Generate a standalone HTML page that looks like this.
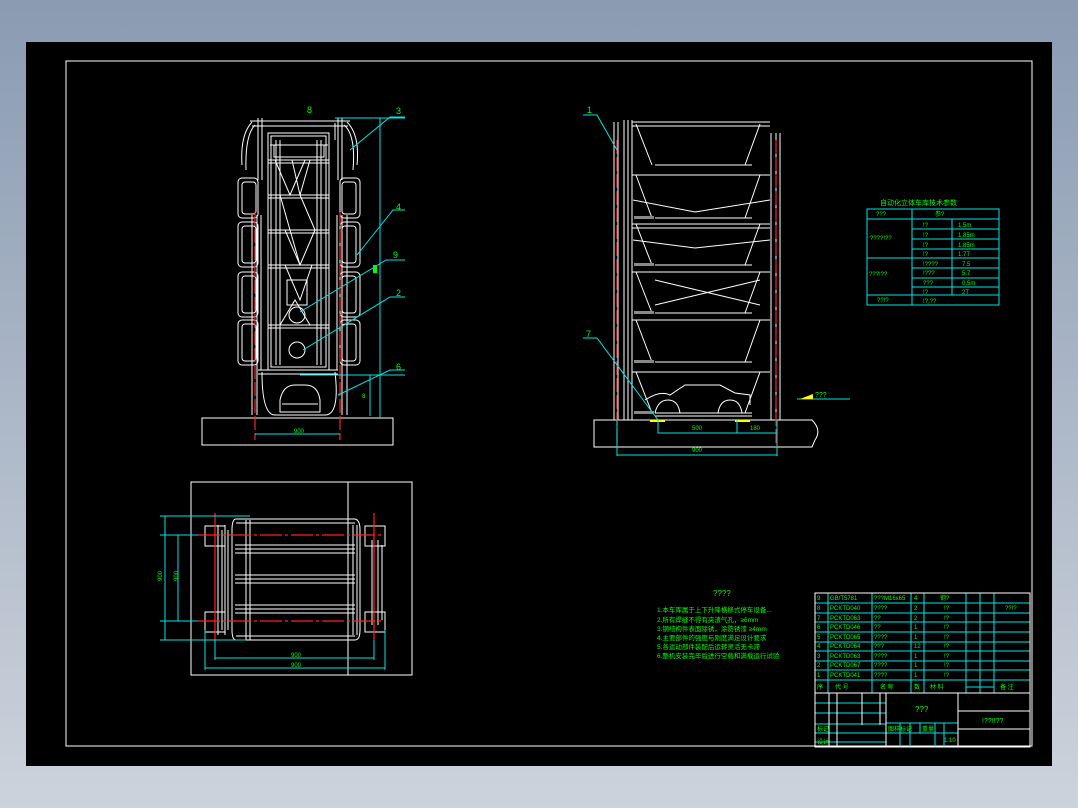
<!DOCTYPE html>
<html><head><meta charset="utf-8"><style>
html,body{margin:0;padding:0;width:1078px;height:808px;overflow:hidden;background:linear-gradient(#8a9bb2,#cdd3dc);}
svg{position:absolute;left:0;top:0}
text{font-family:"Liberation Sans","Noto Sans CJK SC",sans-serif;fill:#00ff00}
</style></head><body>
<svg width="1078" height="808" viewBox="0 0 1078 808">
<rect x="26" y="42" width="1026" height="724" fill="#000"/>
<rect x="66" y="61" width="966" height="685" fill="none" stroke="#fff" stroke-width="1"/>

<!-- LEFT ELEVATION -->
<g stroke="#fff" fill="none" stroke-width="1">
<rect x="202" y="418" width="191" height="27"/>
<path d="M252 122 Q240 135 242 165 M347 122 Q360 135 357 165 M255 125 Q245 135 246 170 M344 125 Q356 135 353 170"/>
<path d="M250 121 H350 M252 126 H348 M258 118 V180 M262 118 V180 M338 118 V180 M342 118 V180"/>
<rect x="268" y="133" width="61" height="237"/>
<rect x="271" y="136" width="55" height="231"/>
<rect x="274" y="145" width="50" height="12"/>
<path d="M268 160 H329 M268 163 H329 M268 195 H329 M268 198 H329 M268 230 H329 M268 233 H329 M268 265 H329 M268 268 H329 M268 325 H329 M268 328 H329"/>
<path d="M276 140 V365 M280 140 V365 M317 140 V365 M321 140 V365"/>
<path d="M275 160 L290 195 L305 160 M300 195 L315 230 M280 195 L290 230 L300 265 M285 230 L300 265 L315 230 M292 160 L300 195 M310 160 L300 195"/>
<path d="M285 265 L300 300 L312 265 M280 325 L295 300 L310 325"/>
<rect x="238" y="178" width="20" height="40" rx="4"/><rect x="238" y="222" width="20" height="45" rx="4"/>
<rect x="238" y="272" width="20" height="45" rx="4"/><rect x="238" y="320" width="20" height="45" rx="4"/>
<rect x="340" y="178" width="20" height="40" rx="4"/><rect x="340" y="222" width="20" height="45" rx="4"/>
<rect x="340" y="272" width="20" height="45" rx="4"/><rect x="340" y="320" width="20" height="45" rx="4"/>
<rect x="242" y="182" width="14" height="32" rx="3"/><rect x="242" y="226" width="14" height="37" rx="3"/>
<rect x="242" y="276" width="14" height="37" rx="3"/><rect x="242" y="324" width="14" height="37" rx="3"/>
<rect x="342" y="182" width="14" height="32" rx="3"/><rect x="342" y="226" width="14" height="37" rx="3"/>
<rect x="342" y="276" width="14" height="37" rx="3"/><rect x="342" y="324" width="14" height="37" rx="3"/>
<path d="M252 215 V415 M257 215 V415 M342 215 V415 M347 215 V415 M261 215 V370 M337 215 V370"/>
<path d="M258 370 H338 M258 374 H338 M262 372 Q262 415 275 415 H325 Q340 415 335 372"/>
<path d="M280 400 Q283 385 295 385 H305 Q318 385 320 400 V412 H280 Z M282 404 H318"/>
<rect x="287" y="280" width="20" height="25"/><circle cx="297" cy="315" r="8"/><circle cx="297" cy="350" r="8"/>
<path d="M262 123 V140 M335 123 V140 M270 145 H328"/>
</g>
<g stroke="#ff2020" stroke-width="1.2"><path d="M255 212 V440 M340 212 V440" stroke-dasharray="14 3"/></g>
<g stroke="#00e5e5" fill="none" stroke-width="1">
<path d="M335 118 H380 V418 M380 118 H405 M255 434 H340 M300 375 H370 V416 M370 375 H405"/>
<path d="M350 150 L390 117 H405 M357 255 L393 210 H405 M300 312 L386 260 H405 M303 350 L390 297 H405 M338 395 L390 370 H405"/>
</g>
<g font-size="9"><text x="307" y="113">8</text><text x="396" y="114">3</text><text x="396" y="210">4</text><text x="393" y="258">9</text><text x="396" y="296">2</text><text x="396" y="370">6</text>
<text x="294" y="433" font-size="6">900</text><text x="362" y="398" font-size="6">8</text></g>
<rect x="373" y="265" width="4" height="8" fill="#0f0"/>

<!-- RIGHT ELEVATION -->
<g stroke="#fff" fill="none" stroke-width="1">
<path d="M594 420 H812 Q822 430 815 440 L812 447 H594 Z"/>
<path d="M614 122 V420 M618 122 V420 M624 120 V420 M628 120 V420 M632 120 V420"/>
<path d="M771 133 V420 M776 133 V420 M780 133 V420"/>
<path d="M632 122 H770 M632 126 H770 M655 165 H752 M632 175 H770 M655 218 H752 M632 224 H770 M632 228 H770 M655 265 H752 M632 272 H770 M655 313 H752 M632 320 H770 M655 362 H752 M632 372 H770 M655 413 H752 M655 416 H752"/>
<path d="M636 124 L652 165 M760 124 L745 165 M636 175 L652 218 M760 175 L745 218 M636 224 L652 265 M760 224 L745 265 M636 272 L652 313 M760 272 L745 313 M636 320 L652 362 M760 320 L745 362 M636 372 L652 413 M760 372 L745 413"/>
<path d="M633 200 L695 212 L770 200 M633 240 L695 248 L770 240 M655 280 L760 305 M655 305 L760 280"/>
<path d="M645 400 Q660 390 670 395 L685 385 H720 L735 393 L750 395 V405 M655 413 Q658 400 668 400 Q678 400 680 413 M718 413 Q720 400 730 400 Q740 400 742 413"/>
</g>
<g fill="#888"><rect x="634" y="216" width="20" height="3"/><rect x="634" y="263" width="20" height="3"/><rect x="634" y="311" width="20" height="3"/><rect x="634" y="360" width="20" height="3"/><rect x="634" y="411" width="20" height="3"/></g>
<g stroke="#ff2020" stroke-width="1.2" stroke-dasharray="14 3"><path d="M617 140 V447 M776 140 V447"/></g>
<rect x="650" y="420" width="15" height="2" fill="#ff0"/><rect x="735" y="420" width="15" height="2" fill="#ff0"/>
<g stroke="#00e5e5" fill="none" stroke-width="1">
<path d="M583 115 H597 L617 150 M583 338 H597 L658 420 M658 420 V433 H777 M737 420 V433 M617 420 V456 M777 420 V456 M617 455 H777 M797 399 H850"/>
</g>
<path d="M800 399 L813 394 V399 Z" fill="#ff0"/>
<g font-size="9"><text x="587" y="113">1</text><text x="586" y="337">7</text><text x="815" y="397" font-size="7">???</text>
<text x="692" y="430" font-size="6">500</text><text x="750" y="430" font-size="6">180</text><text x="692" y="452" font-size="6">900</text></g>

<!-- PLAN VIEW -->
<g stroke="#fff" fill="none" stroke-width="1">
<rect x="191" y="482" width="221" height="193"/><path d="M348 482 V675"/>
<rect x="205" y="526" width="20" height="20"/><rect x="205" y="612" width="20" height="20"/>
<rect x="365" y="526" width="20" height="20"/><rect x="365" y="612" width="20" height="20"/>
<path d="M236 519 H355 Q360 520 360 530 V630 Q360 640 355 640 H236 Q232 640 232 630 V530 Q232 519 236 519 Z"/>
<path d="M236 523 H355 M236 636 H355"/>
<path d="M235 545 H355 M235 549 H355 M235 553 H355 M235 575 H355 M235 579 H355 M235 583 H355 M235 605 H355 M235 609 H355 M235 613 H355"/>
<path d="M215 530 V630 M218 525 V635 M222 530 V630 M225 525 V635 M228 530 V630 M250 520 V640 M246 520 V640 M353 525 V635 M357 525 V635 M372 540 V625 M378 540 V625 M382 545 V620"/>
</g>
<g stroke="#ff2020" stroke-width="1.2"><path d="M198 535 H383 M198 621 H383" stroke-dasharray="22 3 3 3"/><path d="M215 513 V640 M374 513 V640"/></g>
<g stroke="#00e5e5" fill="none" stroke-width="1">
<path d="M160 516 H250 M160 535 H198 M160 621 H198 M160 640 H246 M165 516 V640 M178 535 V621 M215 640 V660 M374 640 V660 M385 630 V670 M205 630 V670 M215 658 H374 M205 668 H385"/>
</g>
<g font-size="6"><text x="291" y="657">900</text><text x="291" y="667">900</text><text x="157" y="580" transform="rotate(-90 160 578)">900</text><text x="173" y="580" transform="rotate(-90 176 578)">900</text></g>

<!-- SPEC TABLE -->
<g stroke="#00e5e5" fill="none" stroke-width="1">
<rect x="867" y="209" width="132" height="96"/>
<path d="M867 219 H999 M912 209 V305 M952 219 V295 M912 229 H999 M912 239 H999 M912 249 H999 M867 258 H999 M912 268 H999 M912 278 H999 M912 287 H999 M867 295 H999"/>
</g>
<g font-size="6"><text x="880" y="205" font-size="7">自动化立体车库技术参数</text><text x="876" y="216">???</text><text x="935" y="216">参?</text><text x="870" y="240">????!??</text><text x="869" y="276">???!??</text><text x="877" y="302">??!?</text>
<text x="923" y="227">!?</text><text x="923" y="237">!?</text><text x="923" y="247">!?</text><text x="923" y="256">!?</text><text x="923" y="266">!????</text><text x="923" y="275">!???</text><text x="923" y="285">???</text><text x="923" y="294">!?</text><text x="923" y="303">!?,??</text>
<text x="958" y="227">1.5m</text><text x="958" y="237">1.85m</text><text x="958" y="247">1.85m</text><text x="958" y="256">1.7T</text><text x="962" y="266">7.5</text><text x="962" y="275">5.7</text><text x="962" y="285">0.5m</text><text x="962" y="294">2T</text></g>

<!-- NOTES -->
<g font-size="6.5"><text x="713" y="596" font-size="8">????</text>
<text x="657" y="612">1.本车库属于上下升降横移式停车设备...</text>
<text x="657" y="622">2.所有焊缝不得有夹渣气孔，≥6mm</text>
<text x="657" y="631">3.钢结构件表面除锈，涂防锈漆 ≥4mm</text>
<text x="657" y="640">4.主要部件的强度与刚度满足设计要求</text>
<text x="657" y="649">5.各运动部件装配后运转灵活无卡滞</text>
<text x="657" y="658">6.整机安装完毕后进行空载和满载运行试验</text></g>

<!-- TITLE BLOCK -->
<g stroke="#00e5e5" fill="none" stroke-width="1">
<path d="M815 603 H1030 M815 613 H1030 M815 622 H1030 M815 632 H1030 M815 642 H1030 M815 651 H1030 M815 661 H1030 M815 670 H1030 M815 680 H1030"/>
<path d="M828 593 V693 M872 593 V693 M911 593 V693 M924 593 V693 M966 593 V693 M980 593 V693 M994 593 V693 M966 687 H994"/>
<path d="M815 703 H886 M815 713 H886 M815 724 H886 M815 733 H886 M815 742 H886 M886 723 H958 M886 733 H958 M900 723 V747 M910 723 V747 M920 723 V733 M935 723 V747 M944 723 V747"/>
</g>
<g stroke="#fff" fill="none" stroke-width="1">
<path d="M815 593 H1030 V747 H815 Z M815 693 H1030 M886 693 V747 M958 693 V747 M958 711 H1030 M958 729 H1030 M829 693 V747 M837 693 V747 M862 693 V725 M880 693 V725"/>
</g>
<g font-size="6"><text x="817" y="600">9</text><text x="817" y="610">8</text><text x="817" y="620">7</text><text x="817" y="629">6</text><text x="817" y="639">5</text><text x="817" y="648">4</text><text x="817" y="658">3</text><text x="817" y="667">2</text><text x="817" y="677">1</text>
<text x="830" y="600">GB/T5781</text><text x="830" y="610">PCKTD040</text><text x="830" y="620">PCKTD063</text><text x="830" y="629">PCKTD046</text><text x="830" y="639">PCKTD065</text><text x="830" y="648">PCKTD064</text><text x="830" y="658">PCKTD063</text><text x="830" y="667">PCKTD067</text><text x="830" y="677">PCKTD041</text>
<text x="874" y="600">???M16x65</text><text x="874" y="610">????</text><text x="874" y="620">??</text><text x="874" y="629">??</text><text x="874" y="639">????</text><text x="874" y="648">???</text><text x="874" y="658">????</text><text x="874" y="667">????</text><text x="874" y="677">????</text>
<text x="914" y="600">4</text><text x="914" y="610">2</text><text x="914" y="620">2</text><text x="914" y="629">1</text><text x="914" y="639">1</text><text x="914" y="648">12</text><text x="914" y="658">1</text><text x="914" y="667">1</text><text x="914" y="677">1</text>
<text x="940" y="600">钢?</text><text x="944" y="610">!?</text><text x="944" y="620">!?</text><text x="944" y="629">!?</text><text x="944" y="639">!?</text><text x="944" y="648">!?</text><text x="944" y="658">!?</text><text x="944" y="667">!?</text><text x="944" y="677">!?</text>
<text x="1005" y="610">??!?</text>
<text x="817" y="689">序</text><text x="835" y="689">代 号</text><text x="880" y="689">名 称</text><text x="914" y="689">数</text><text x="930" y="689">材 料</text><text x="1000" y="689">备 注</text>
<text x="915" y="712" font-size="8">???</text><text x="982" y="723" font-size="7">!??!!??</text>
<text x="888" y="731">图样标记</text><text x="922" y="731">重量</text><text x="944" y="742">1:10</text><text x="817" y="731">标记</text><text x="817" y="744">设计</text></g>
</svg>
</body></html>
